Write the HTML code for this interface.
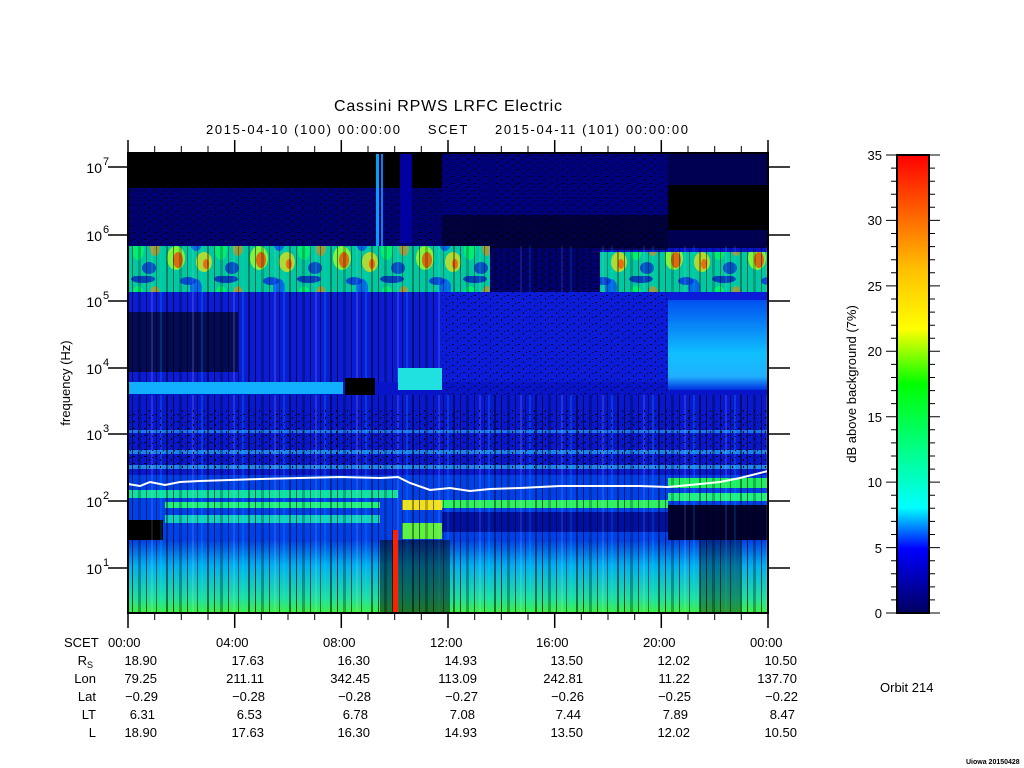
<!DOCTYPE html>
<html><head><meta charset="utf-8"><style>
html,body{margin:0;padding:0;background:#fff;width:1024px;height:768px;overflow:hidden}
svg{display:block}
text{font-family:"Liberation Sans",sans-serif;fill:#000}
</style></head><body>
<svg width="1024" height="768" viewBox="0 0 1024 768" xmlns="http://www.w3.org/2000/svg">
<defs>
<linearGradient id="cb" x1="0" y1="1" x2="0" y2="0">
<stop offset="0" stop-color="#000060"/><stop offset="0.14" stop-color="#0000ff"/>
<stop offset="0.23" stop-color="#00ffff"/><stop offset="0.5" stop-color="#00ff00"/>
<stop offset="0.62" stop-color="#ffff00"/><stop offset="0.75" stop-color="#ffc000"/>
<stop offset="1" stop-color="#ff0000"/></linearGradient>
<pattern id="vs" width="41" height="10" patternUnits="userSpaceOnUse">
<rect x="2" width="2" height="10" fill="#000" opacity=".5"/><rect x="9" width="1" height="10" fill="#000" opacity=".7"/>
<rect x="15" width="3" height="10" fill="#000" opacity=".3"/><rect x="23" width="1" height="10" fill="#000" opacity=".6"/>
<rect x="28" width="2" height="10" fill="#fff" opacity=".12"/><rect x="33" width="1" height="10" fill="#000" opacity=".5"/>
<rect x="37" width="2" height="10" fill="#00ffff" opacity=".15"/>
</pattern>
<pattern id="dt" width="11" height="7" patternUnits="userSpaceOnUse">
<rect x="1" y="1" width="2" height="1" fill="#000"/><rect x="6" y="4" width="1" height="2" fill="#000"/><rect x="9" y="2" width="1" height="1" fill="#000"/>
</pattern>
<pattern id="bl" width="83" height="46" patternUnits="userSpaceOnUse">
<rect width="83" height="46" fill="#00c8a0"/>
<ellipse cx="10" cy="28" rx="9" ry="12" fill="#a0ff20" opacity=".8"/>
<ellipse cx="12" cy="30" rx="5" ry="8" fill="#ff3000" opacity=".7"/>
<ellipse cx="30" cy="12" rx="6" ry="9" fill="#0040ff" opacity=".7"/>
<ellipse cx="38" cy="32" rx="8" ry="10" fill="#ffe000" opacity=".7"/>
<ellipse cx="40" cy="34" rx="3" ry="5" fill="#ff4000" opacity=".7"/>
<ellipse cx="55" cy="20" rx="6" ry="10" fill="#00ff60" opacity=".7"/>
<ellipse cx="66" cy="38" rx="7" ry="6" fill="#0020d0" opacity=".7"/>
<ellipse cx="72" cy="18" rx="5" ry="8" fill="#ff8000" opacity=".6"/>
<ellipse cx="22" cy="5" rx="8" ry="4" fill="#0030e0" opacity=".8"/>
<ellipse cx="60" cy="3" rx="12" ry="4" fill="#0020c0" opacity=".8"/>
</pattern>
<linearGradient id="lowg" x1="0" y1="0" x2="0" y2="1">
<stop offset="0" stop-color="#0040e8"/><stop offset=".35" stop-color="#00b0f0"/><stop offset=".8" stop-color="#20e0a0"/><stop offset="1" stop-color="#40f040"/></linearGradient>
<linearGradient id="cy" x1="0" y1="0" x2="0" y2="1">
<stop offset="0" stop-color="#0050f0"/><stop offset=".6" stop-color="#10c0ff"/><stop offset=".85" stop-color="#20b0ff"/><stop offset="1" stop-color="#0030e0"/></linearGradient>
</defs>

<rect x="128" y="153" width="640" height="460" fill="#0814c8"/>
<rect x="128" y="153" width="314" height="35" fill="#000"/>
<rect x="128" y="188" width="314" height="58" fill="#000070"/>
<rect x="128" y="188" width="314" height="58" fill="url(#dt)"/>
<rect x="442" y="153" width="226" height="95" fill="#00007c"/>
<rect x="442" y="153" width="226" height="95" fill="url(#dt)"/>
<rect x="442" y="215" width="226" height="35" fill="#000" opacity=".5"/>
<rect x="668" y="153" width="100" height="95" fill="#000050"/>
<rect x="668" y="185" width="100" height="45" fill="#000"/>
<rect x="376" y="153" width="3" height="95" fill="#00a0ff"/><rect x="381" y="153" width="2" height="95" fill="#0080ff"/>
<rect x="400" y="153" width="12" height="90" fill="#0000a0"/>
<rect x="128" y="246" width="362" height="46" fill="url(#bl)"/>
<rect x="490" y="248" width="110" height="45" fill="#000070"/>
<rect x="490" y="248" width="110" height="45" fill="url(#dt)"/>
<rect x="600" y="252" width="168" height="40" fill="url(#bl)"/>
<rect x="128" y="246" width="640" height="46" fill="url(#vs)" opacity=".7"/>
<rect x="128" y="292" width="640" height="90" fill="#0a1cd8"/>
<rect x="128" y="312" width="110" height="60" fill="#000" opacity=".6"/>
<rect x="128" y="292" width="314" height="90" fill="url(#vs)"/>
<rect x="442" y="292" width="226" height="180" fill="url(#dt)" opacity=".8"/>
<rect x="668" y="300" width="100" height="90" fill="url(#cy)"/>
<rect x="128" y="382" width="215" height="12" fill="#10b0ff"/>
<rect x="345" y="378" width="30" height="22" fill="#000"/>
<rect x="398" y="368" width="44" height="22" fill="#20e0e0"/>
<rect x="128" y="395" width="640" height="80" fill="#0818d0"/>
<rect x="128" y="430" width="640" height="3" fill="#20a0ff" opacity=".7"/>
<rect x="128" y="450" width="640" height="4" fill="#20b0ff" opacity=".7"/>
<rect x="128" y="465" width="640" height="4" fill="#30d0ff" opacity=".6"/>
<rect x="128" y="395" width="640" height="80" fill="url(#vs)"/>
<rect x="128" y="410" width="640" height="60" fill="url(#dt)"/>
<rect x="128" y="475" width="640" height="65" fill="#0040e8"/>
<rect x="128" y="490" width="270" height="8" fill="#10e0a0"/>
<rect x="165" y="502" width="215" height="6" fill="#20f080"/>
<rect x="165" y="515" width="215" height="8" fill="#10d0c0"/>
<rect x="128" y="520" width="35" height="20" fill="#000"/>
<rect x="442" y="500" width="226" height="8" fill="#30f060"/>
<rect x="442" y="512" width="226" height="20" fill="#0010a0"/>
<rect x="402" y="500" width="40" height="10" fill="#f0e020"/>
<rect x="402" y="523" width="40" height="16" fill="#60f040"/>
<rect x="668" y="478" width="100" height="10" fill="#20f060"/>
<rect x="668" y="493" width="100" height="8" fill="#20f080"/>
<rect x="668" y="505" width="100" height="35" fill="#000030"/>
<rect x="128" y="475" width="640" height="65" fill="url(#vs)" opacity=".8"/>
<rect x="128" y="540" width="640" height="73" fill="url(#lowg)"/>
<rect x="128" y="540" width="640" height="73" fill="url(#vs)"/>
<rect x="380" y="540" width="70" height="73" fill="#000" opacity=".5"/>
<rect x="700" y="540" width="40" height="73" fill="#000" opacity=".35"/>
<rect x="393" y="530" width="5" height="83" fill="#ff2000"/>
<polyline fill="none" stroke="#fff" stroke-width="2" points="128,484 140,486 150,482 165,485 180,482 200,481 230,480 260,479 300,478 340,477 380,478 398,477 410,483 430,490 450,488 470,491 490,489 520,488 560,486 600,486 640,486 668,487 690,485 720,482 740,478 768,471"/>
<rect x="128" y="153" width="640" height="460" fill="none" stroke="#000" stroke-width="2"/>

<g stroke="#000" stroke-width="1.5">
<line x1="128" y1="140" x2="128" y2="153"/><line x1="234.7" y1="140" x2="234.7" y2="153"/><line x1="341.3" y1="140" x2="341.3" y2="153"/><line x1="448" y1="140" x2="448" y2="153"/><line x1="554.7" y1="140" x2="554.7" y2="153"/><line x1="661.3" y1="140" x2="661.3" y2="153"/><line x1="768" y1="140" x2="768" y2="153"/>
<line x1="128" y1="613" x2="128" y2="628"/><line x1="234.7" y1="613" x2="234.7" y2="628"/><line x1="341.3" y1="613" x2="341.3" y2="628"/><line x1="448" y1="613" x2="448" y2="628"/><line x1="554.7" y1="613" x2="554.7" y2="628"/><line x1="661.3" y1="613" x2="661.3" y2="628"/><line x1="768" y1="613" x2="768" y2="628"/>
<line x1="108" y1="167" x2="128" y2="167"/><line x1="108" y1="235" x2="128" y2="235"/><line x1="108" y1="301" x2="128" y2="301"/><line x1="108" y1="368" x2="128" y2="368"/><line x1="108" y1="434" x2="128" y2="434"/><line x1="108" y1="501" x2="128" y2="501"/><line x1="108" y1="568" x2="128" y2="568"/>
<line x1="768" y1="167" x2="790" y2="167"/><line x1="768" y1="235" x2="790" y2="235"/><line x1="768" y1="301" x2="790" y2="301"/><line x1="768" y1="368" x2="790" y2="368"/><line x1="768" y1="434" x2="790" y2="434"/><line x1="768" y1="501" x2="790" y2="501"/><line x1="768" y1="568" x2="790" y2="568"/>
</g>
<g stroke="#000" stroke-width="1">
<path d="M154.7 146V153M181.3 146V153M208 146V153M261.3 146V153M288 146V153M314.7 146V153M368 146V153M394.7 146V153M421.3 146V153M474.7 146V153M501.3 146V153M528 146V153M581.3 146V153M608 146V153M634.7 146V153M688 146V153M714.7 146V153M741.3 146V153"/>
<path d="M154.7 613V620M181.3 613V620M208 613V620M261.3 613V620M288 613V620M314.7 613V620M368 613V620M394.7 613V620M421.3 613V620M474.7 613V620M501.3 613V620M528 613V620M581.3 613V620M608 613V620M634.7 613V620M688 613V620M714.7 613V620M741.3 613V620"/>
</g>

<text x="334" y="111" font-size="16" textLength="228">Cassini RPWS LRFC Electric</text>
<text x="206" y="134" font-size="13" textLength="482" xml:space="preserve">2015-04-10 (100) 00:00:00     SCET     2015-04-11 (101) 00:00:00</text>

<g font-size="14" text-anchor="end">
<text x="102" y="173">10</text><text x="102" y="241">10</text><text x="102" y="307">10</text><text x="102" y="374">10</text><text x="102" y="440">10</text><text x="102" y="507">10</text><text x="102" y="574">10</text>
</g>
<g font-size="11">
<text x="103" y="165">7</text><text x="103" y="233">6</text><text x="103" y="299">5</text><text x="103" y="366">4</text><text x="103" y="432">3</text><text x="103" y="499">2</text><text x="103" y="566">1</text>
</g>
<text transform="translate(70,383) rotate(-90)" font-size="13" text-anchor="middle">frequency (Hz)</text>

<rect x="897" y="155" width="32" height="458" fill="url(#cb)" stroke="#000" stroke-width="2"/>
<g stroke="#000" stroke-width="1">
<path d="M886 155H897M886 220.4H897M886 285.9H897M886 351.3H897M886 416.7H897M886 482.1H897M886 547.6H897M886 613H897M929 155H940M929 220.4H940M929 285.9H940M929 351.3H940M929 416.7H940M929 482.1H940M929 547.6H940M929 613H940"/>
<path d="M891 168.1H897M891 181.2H897M891 194.3H897M891 207.3H897M891 233.5H897M891 246.6H897M891 259.7H897M891 272.8H897M891 299H897M891 312.1H897M891 325.2H897M891 338.2H897M891 364.4H897M891 377.5H897M891 390.6H897M891 403.6H897M891 429.8H897M891 442.9H897M891 456H897M891 469.1H897M891 495.2H897M891 508.3H897M891 521.4H897M891 534.5H897M891 560.7H897M891 573.8H897M891 586.9H897M891 599.9H897"/>
<path d="M929 168.1H935M929 181.2H935M929 194.3H935M929 207.3H935M929 233.5H935M929 246.6H935M929 259.7H935M929 272.8H935M929 299H935M929 312.1H935M929 325.2H935M929 338.2H935M929 364.4H935M929 377.5H935M929 390.6H935M929 403.6H935M929 429.8H935M929 442.9H935M929 456H935M929 469.1H935M929 495.2H935M929 508.3H935M929 521.4H935M929 534.5H935M929 560.7H935M929 573.8H935M929 586.9H935M929 599.9H935"/>
</g>
<g font-size="13" text-anchor="end">
<text x="882" y="160">35</text><text x="882" y="225">30</text><text x="882" y="291">25</text><text x="882" y="356">20</text><text x="882" y="422">15</text><text x="882" y="487">10</text><text x="882" y="553">5</text><text x="882" y="618">0</text>
</g>
<text transform="translate(856,384) rotate(-90)" font-size="13" text-anchor="middle">dB above background (7%)</text>

<g font-size="13">
<text x="64" y="647">SCET</text>
<text x="108" y="647">00:00</text><text x="216" y="647">04:00</text><text x="323" y="647">08:00</text><text x="430" y="647">12:00</text><text x="536" y="647">16:00</text><text x="643" y="647">20:00</text><text x="750" y="647">00:00</text>
</g>
<g font-size="13" text-anchor="end">
<text x="93" y="665">R<tspan font-size="9" dy="3">S</tspan></text>
<text x="96" y="683">Lon</text><text x="96" y="701">Lat</text><text x="96" y="719">LT</text><text x="96" y="737">L</text>
<text x="157" y="665">18.90</text><text x="264" y="665">17.63</text><text x="370" y="665">16.30</text><text x="477" y="665">14.93</text><text x="583" y="665">13.50</text><text x="690" y="665">12.02</text><text x="797" y="665">10.50</text>
<text x="157" y="683">79.25</text><text x="264" y="683">211.11</text><text x="370" y="683">342.45</text><text x="477" y="683">113.09</text><text x="583" y="683">242.81</text><text x="690" y="683">11.22</text><text x="797" y="683">137.70</text>
<text x="158" y="701">−0.29</text><text x="265" y="701">−0.28</text><text x="371" y="701">−0.28</text><text x="478" y="701">−0.27</text><text x="584" y="701">−0.26</text><text x="691" y="701">−0.25</text><text x="798" y="701">−0.22</text>
<text x="155" y="719">6.31</text><text x="262" y="719">6.53</text><text x="368" y="719">6.78</text><text x="475" y="719">7.08</text><text x="581" y="719">7.44</text><text x="688" y="719">7.89</text><text x="795" y="719">8.47</text>
<text x="157" y="737">18.90</text><text x="264" y="737">17.63</text><text x="370" y="737">16.30</text><text x="477" y="737">14.93</text><text x="583" y="737">13.50</text><text x="690" y="737">12.02</text><text x="797" y="737">10.50</text>
</g>
<text x="880" y="692" font-size="13">Orbit  214</text>
<text x="966" y="764" font-size="7" font-weight="bold">Uiowa 20150428</text>
</svg>
</body></html>
